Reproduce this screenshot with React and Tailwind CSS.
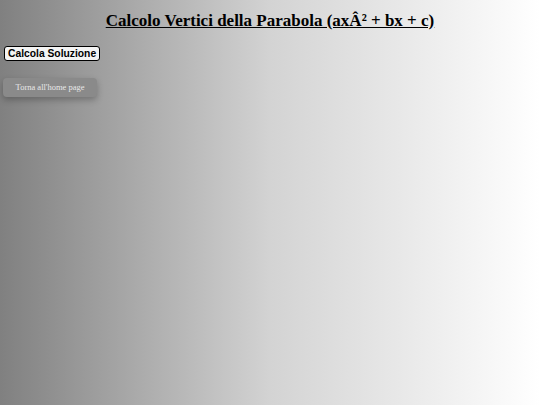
export default function App() {
  return (
    <div className="min-h-[405px] w-full bg-[linear-gradient(to_right,#808080,#d3d3d3,#ffffff)] px-[4px] pt-[10px]">
      <h1 className="text-center font-['Liberation_Serif',serif] text-[17px] font-bold leading-[22px] text-black underline">
        Calcolo Vertici della Parabola (axÂ² + bx + c)
      </h1>
      <div className="mt-[14px] flex">
        <button className="rounded-[3px] border border-black bg-[#f4f4f4] px-[3px] py-0 font-['Liberation_Sans',sans-serif] text-[10.3px] font-bold leading-[13px] text-black">
          Calcola Soluzione
        </button>
      </div>
      <div className="mt-[17px] flex">
        <a className="-ml-[1px] flex h-[19px] w-[94px] items-center justify-center rounded-[4px] bg-[#8a8a8a] font-['Liberation_Serif',serif] text-[8.5px] text-[#e8e8e8] shadow-[0_3px_6px_rgba(0,0,0,0.25)]">
          Torna all'home page
        </a>
      </div>
    </div>
  );
}
